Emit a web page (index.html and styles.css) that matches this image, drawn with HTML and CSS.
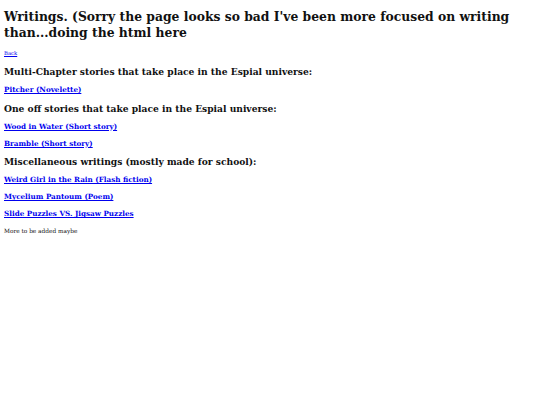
FILE: index.html
```html
<!DOCTYPE html>
<html>
<head>
<meta charset="utf-8">
<title>Writings</title>
<link rel="stylesheet" href="styles.css">
</head>
<body>
<main class="page">
  <h1 class="title">Writings. (Sorry the page looks so bad I've been more focused on writing than...doing the html here</h1>
  <a class="back" href="#">Back</a>
  <h2 class="section">Multi-Chapter stories that take place in the Espial universe:</h2>
  <h4 class="item"><a href="#">Pitcher (Novelette)</a></h4>
  <h2 class="section">One off stories that take place in the Espial universe:</h2>
  <h4 class="item"><a href="#">Wood in Water (Short story)</a></h4>
  <h4 class="item"><a href="#">Bramble (Short story)</a></h4>
  <h2 class="section">Miscellaneous writings (mostly made for school):</h2>
  <h4 class="item"><a href="#">Weird Girl in the Rain (Flash fiction)</a></h4>
  <h4 class="item"><a href="#">Mycelium Pantoum (Poem)</a></h4>
  <h4 class="item"><a href="#">Slide Puzzles VS. Jigsaw Puzzles</a></h4>
  <p class="note">More to be added maybe</p>
</main>
</body>
</html>
```
FILE: styles.css
```css
html, body {
  margin: 0;
  padding: 0;
  background: #ffffff;
}

.page {
  display: flex;
  flex-direction: column;
  align-items: flex-start;
  gap: 7.15px;
  padding: 9px 4px 8px 4px;
  font-family: "DejaVu Serif", "Liberation Serif", serif;
  color: #111111;
}

.title {
  margin: 0 0 1px 0;
  font-size: 12.35px;
  line-height: 16px;
  font-weight: bold;
}

.back {
  margin: 0 0 2px 0;
  font-size: 5.3px;
  line-height: 8px;
  color: #0000ee;
}

.section {
  margin: 0;
  font-size: 9.15px;
  line-height: 12px;
  font-weight: bold;
}

.item {
  margin: 0;
  font-size: 7.2px;
  line-height: 10px;
  font-weight: bold;
}

.item a {
  color: #0000ee;
}

.note {
  margin: 0;
  font-size: 5.8px;
  line-height: 8px;
}
```
